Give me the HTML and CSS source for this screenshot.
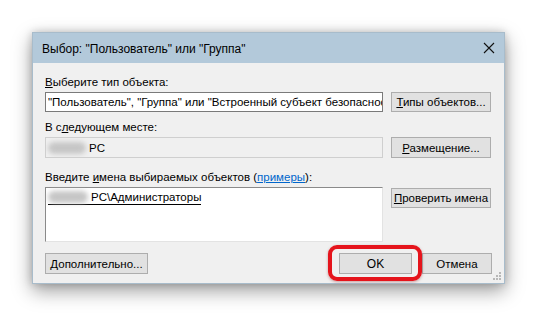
FILE: index.html
```html
<!DOCTYPE html>
<html lang="ru">
<head>
<meta charset="utf-8">
<link rel="stylesheet" href="styles.css">
</head>
<body>
<div class="window">
  <div class="titlebar">
    <span class="title">Выбор: "Пользователь" или "Группа"</span>
    <svg class="close" width="12" height="12" viewBox="0 0 12 12"><path d="M1 1 L11 11 M11 1 L1 11" stroke="#111" stroke-width="1.1" fill="none"/></svg>
  </div>
  <div class="content">
    <div class="label label-first"><u>В</u>ыберите тип объекта:</div>
    <div class="row">
      <div class="field field-white"><span class="clip">"Пользователь", "Группа" или "Встроенный субъект безопаснос</span></div>
      <button class="btn btn-side"><u>Т</u>ипы объектов...</button>
    </div>
    <div class="label">В с<u>л</u>едующем месте:</div>
    <div class="row">
      <div class="field field-gray"><span class="blur"></span><span>PC</span></div>
      <button class="btn btn-side btn-r2"><u>Р</u>азмещение...</button>
    </div>
    <div class="label label-third">Введите <u>и</u>мена выбираемых объектов (<a class="link">примеры</a>):</div>
    <div class="row row-top">
      <div class="textarea"><span class="resolved"><span class="blur blur-ta"></span><span>PC\Администраторы</span></span></div>
      <button class="btn btn-side btn-check"><u>П</u>роверить имена</button>
    </div>
    <div class="footer">
      <button class="btn btn-more"><u>Д</u>ополнительно...</button>
      <div class="spacer"></div>
      <div class="ok-wrap"><button class="btn btn-ok">OK</button></div>
      <button class="btn btn-cancel">Отмена</button>
    </div>
  </div>
  <div class="grip">
    <i class="d d1"></i><i class="d d2"></i><i class="d d3"></i><i class="d d4"></i><i class="d d5"></i><i class="d d6"></i>
  </div>
</div>
</body>
</html>
```
FILE: styles.css
```css
* { box-sizing: border-box; }
html, body { margin: 0; padding: 0; background: #fff; }
body {
  width: 538px;
  height: 316px;
  overflow: hidden;
  padding: 32px 0 0 32px;
  font-family: "Liberation Sans", Arial, sans-serif;
  font-size: 11.5px;
  color: #000;
}
.window {
  position: relative;
  width: 473px;
  height: 252px;
  background: #f0f0f0;
  border: 1px solid #a8bccb;
  box-shadow: 0 7px 18px rgba(0,0,0,0.38), 0 0 8px rgba(0,0,0,0.18);
}
.titlebar {
  height: 30px;
  background: #b3c9da;
  display: flex;
  align-items: center;
  padding: 0 9px 0 9px;
}
.title { flex: 1; font-size: 12px; color: #000; padding-top: 1px; }
.close { display: block; }
.content {
  padding: 0 13px 0 12px;
  display: flex;
  flex-direction: column;
}
.label { height: 16px; line-height: 16px; margin-top: 7px; margin-bottom: 2px; white-space: nowrap; }
.label-first { margin-top: 11px; }
.label-third { margin-top: 11px; }
.link { color: #0066cc; text-decoration: underline; }
.row { display: flex; gap: 8px; align-items: stretch; }
.row-top { align-items: flex-start; }
.field {
  width: 338px;
  height: 20px;
  display: flex;
  align-items: center;
  padding-left: 2px;
  overflow: hidden;
  white-space: nowrap;
}
.field-white { background: #fff; border: 1px solid #7a7a7a; }
.field-gray { background: #f0f0f0; border: 1px solid #cfcfcf; height: 21px; }
.clip { overflow: hidden; min-width: 0; }
.blur {
  display: inline-block;
  width: 38px;
  height: 12px;
  border-radius: 6px;
  background: #c6c6c6;
  filter: blur(2.5px);
  margin-right: 3px;
  vertical-align: middle;
}
.textarea {
  width: 338px;
  height: 55px;
  background: #fff;
  border-top: 1px solid #8a8a8a;
  border-left: 1px solid #8a8a8a;
  border-right: 1px solid #e3e3e3;
  border-bottom: 1px solid #e3e3e3;
  padding: 2px 0 0 2px;
  white-space: nowrap;
}
.blur-ta { width: 40px; }
.resolved {
  display: inline-flex;
  align-items: center;
  line-height: 14px;
  border-bottom: 1px solid #000;
  padding-bottom: 0;
}
.btn {
  font-family: inherit;
  font-size: 11.5px;
  color: #000;
  background: #e1e1e1;
  border: 1px solid #adadad;
  border-radius: 0;
  padding: 0;
  margin: 0;
  height: 20px;
  white-space: nowrap;
}
.btn-side { width: 100px; }
.btn-r2 { height: 21px; }
.btn-check { margin-top: 1px; }
.footer {
  display: flex;
  align-items: center;
  margin-top: 11px;
}
.btn-more { width: 103px; height: 21px; }
.spacer { flex: 1; }
.ok-wrap { position: relative; margin-right: 10px; }
.btn-ok { width: 73px; height: 21px; display: block; font-size: 12px; }
.ok-wrap::after {
  content: "";
  position: absolute;
  left: -11px;
  right: -10px;
  top: -8px;
  bottom: -7px;
  border: 4px solid #e5141c;
  border-radius: 9px;
  box-shadow: 0 1px 3px rgba(120,0,0,0.35);
  pointer-events: none;
}
.btn-cancel { width: 70px; height: 21px; margin-right: -1px; }
.grip { position: absolute; right: 3px; bottom: 3px; width: 8px; height: 8px; }
.d { position: absolute; width: 2px; height: 2px; background: #b8b8b8; }
.d1 { right: 0; bottom: 0; }
.d2 { right: 3px; bottom: 0; }
.d3 { right: 6px; bottom: 0; }
.d4 { right: 0; bottom: 3px; }
.d5 { right: 3px; bottom: 3px; }
.d6 { right: 0; bottom: 6px; }
```
